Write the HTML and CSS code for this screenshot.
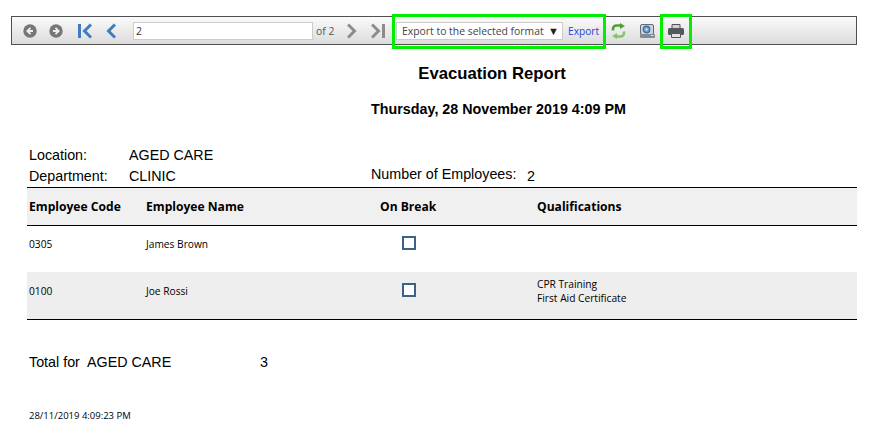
FILE: index.html
```html
<!DOCTYPE html>
<html lang="en">
<head>
<meta charset="utf-8">
<title>Evacuation Report</title>
<link rel="stylesheet" href="styles.css">
</head>
<body>
<div class="toolbar">
  <button class="icon nav-a" aria-label="Back"><svg width="14" height="14" viewBox="0 0 14 14"><circle cx="7" cy="7" r="6.700" fill="#777"/><path d="M7.500 3.800 4.300 7l3.200 3.200M4.500 7h5.500" fill="none" stroke="#eee" stroke-width="1.800"/></svg></button>
  <button class="icon nav-b" aria-label="Forward"><svg width="14" height="14" viewBox="0 0 14 14"><circle cx="7" cy="7" r="6.700" fill="#777"/><path d="M6.500 3.800 9.700 7l-3.200 3.200M9.500 7H4" fill="none" stroke="#eee" stroke-width="1.800"/></svg></button>
  <button class="icon nav-c" aria-label="First page"><svg width="14" height="16" viewBox="0 0 14 16"><path d="M1.500 1v14" stroke="#3f7cbf" stroke-width="3"/><path d="M13 1.500 6.500 8l6.500 6.500" fill="none" stroke="#3f7cbf" stroke-width="3"/></svg></button>
  <button class="icon nav-d" aria-label="Previous page"><svg width="10" height="16" viewBox="0 0 10 16"><path d="M9 1.500 2.500 8 9 14.500" fill="none" stroke="#3f7cbf" stroke-width="3"/></svg></button>
  <input class="page-input" type="text" value="2" aria-label="Page">
  <span class="of">of 2</span>
  <button class="icon nav-e" aria-label="Next page"><svg width="10" height="16" viewBox="0 0 10 16"><path d="M1 1.500 7.500 8 1 14.500" fill="none" stroke="#8c8c8c" stroke-width="3"/></svg></button>
  <button class="icon nav-f" aria-label="Last page"><svg width="14" height="16" viewBox="0 0 14 16"><path d="M12.500 1v14" stroke="#8c8c8c" stroke-width="3"/><path d="M1 1.500 7.500 8 1 14.500" fill="none" stroke="#8c8c8c" stroke-width="3"/></svg></button>
  <div class="mark export-group">
    <div class="select"><span>Export to the selected format</span><span class="caret">▼</span></div>
    <a class="export-link" href="#">Export</a>
  </div>
  <button class="icon refresh" aria-label="Refresh"><svg width="15" height="16" viewBox="0 0 15 16"><path d="M2 7.500V6a3.500 3.500 0 0 1 3.500-3.500H10" fill="none" stroke="#4f9e3a" stroke-width="2.600"/><path d="M9 0v6l5-3z" fill="#4f9e3a"/><path d="M13 8.500V10a3.500 3.500 0 0 1-3.500 3.500H5" fill="none" stroke="#86c46a" stroke-width="2.600"/><path d="M6 10v6l-5-3z" fill="#86c46a"/></svg></button>
  <button class="icon find" aria-label="Find"><svg width="15" height="14" viewBox="0 0 15 14"><rect x=".5" y=".5" width="13" height="10" rx="1.500" fill="#cdd6de" stroke="#667"/><rect x="0" y="10" width="15" height="4" rx="1" fill="#858a91"/><circle cx="6.500" cy="5.500" r="3.300" fill="#6f9fd0" stroke="#38689c" stroke-width="1.200"/><circle cx="6.500" cy="5.500" r="1.100" fill="#e8f0f8"/><path d="M11 11.500h2.500" stroke="#ddd"/></svg></button>
  <div class="mark print-group">
    <button class="icon" aria-label="Print"><svg width="16" height="14" viewBox="0 0 16 14"><path d="M4 .5h8V5H4z" fill="#cfd3d6" stroke="#555"/><rect x="0" y="4" width="16" height="7" rx="1.500" fill="#54585c"/><path d="M3.500 9.500h9v4h-9z" fill="#dfe2e4" stroke="#555"/></svg></button>
  </div>
</div>

<main class="report">
  <h1 class="title">Evacuation Report</h1>
  <p class="date">Thursday, 28 November 2019 4:09 PM</p>

  <div class="meta">
    <div class="meta-row"><span class="meta-label">Location:</span><span>AGED CARE</span></div>
    <div class="meta-row meta-second">
      <span class="meta-label">Department:</span><span class="meta-value">CLINIC</span>
      <span class="count-label">Number of Employees:</span><span>2</span>
    </div>
  </div>

  <table class="grid">
    <thead>
      <tr><th class="c1">Employee Code</th><th class="c2">Employee Name</th><th class="c3">On Break</th><th class="c4">Qualifications</th></tr>
    </thead>
    <tbody>
      <tr><td>0305</td><td class="name">James Brown</td><td class="check"><span class="box"></span></td><td></td></tr>
      <tr class="alt"><td>0100</td><td class="name">Joe Rossi</td><td class="check"><span class="box"></span></td><td class="quals">CPR Training<br>First Aid Certificate</td></tr>
    </tbody>
  </table>

  <div class="total"><span class="total-label">Total for</span><span class="total-name">AGED CARE</span><span>3</span></div>
  <div class="stamp">28/11/2019 4:09:23 PM</div>
</main>
</body>
</html>
```

FILE: styles.css
```css
html, body { margin: 0; padding: 0; background: #fff; }
body { height: 438px; overflow: hidden; font-family: "Liberation Sans", Arial, sans-serif; color: #000; }

.toolbar {
  display: flex;
  align-items: center;
  box-sizing: border-box;
  width: 846px;
  height: 29px;
  margin: 16px 0 0 11px;
  padding-left: 11px;
  border: 1px solid #505050;
  background: linear-gradient(#fafafa, #dcdcdc);
}
.icon { display: flex; align-items: center; justify-content: center; padding: 0; border: 0; background: none; flex: none; }
.nav-a { width: 14px; }
.nav-b { width: 14px; margin-left: 12px; }
.nav-c { width: 14px; margin-left: 15px; }
.nav-d { width: 10px; margin-left: 14px; }
.page-input {
  box-sizing: border-box;
  width: 180px;
  height: 18px;
  margin-left: 17px;
  padding: 0 0 0 2px;
  border: 1px solid #ccc;
  background: #fff;
  font: 10.400px "Open Sans", sans-serif;
  color: #333;
  outline: 0;
}
.of { margin-left: 3px; width: 20px; font: 10.400px "Open Sans", sans-serif; color: #555; white-space: nowrap; }
.nav-e { width: 10px; margin-left: 11px; }
.nav-f { width: 14px; margin-left: 14px; }

.mark { display: flex; align-items: center; box-sizing: border-box; height: 35px; margin-top: 1px; border: 3px solid #00ee00; flex: none; }
.export-group { width: 214px; margin-left: 7px; padding-left: 1px; }
.select {
  display: flex;
  align-items: center;
  justify-content: space-between;
  box-sizing: border-box;
  width: 167px;
  height: 18px;
  padding: 0 3px 0 5px;
  border: 1px solid #ccc;
  background: #fff;
  font: 10.400px "Open Sans", sans-serif;
  color: #444;
  white-space: nowrap;
}
.caret { margin-top: -2px; font-size: 11px; color: #222; }
.export-link { margin-left: 5px; font: 10.200px "Open Sans", sans-serif; color: #2a3fd8; text-decoration: none; }
.refresh { width: 15px; margin-left: 5px; }
.find { width: 15px; margin-left: 14px; }
.print-group { width: 32px; margin-left: 5px; justify-content: center; }

.title { margin: 20px 0 0; padding-left: 103px; text-align: center; font-size: 16.700px; line-height: 18px; font-weight: bold; }
.date { margin: 18px 0 0; padding-left: 116px; text-align: center; font-size: 14.300px; line-height: 16px; font-weight: bold; }

.meta { margin: 30px 0 0 29px; font-size: 14.300px; line-height: 16px; }
.meta-row { display: flex; }
.meta-label { width: 100px; }
.meta-second { margin-top: 5px; }
.meta-value { width: 242px; }
.count-label { width: 156px; margin-top: -2px; }

.grid { width: 830px; margin: 3px 0 0 27px; border-collapse: collapse; table-layout: fixed; font-family: "Open Sans", sans-serif; font-size: 10.200px; }
.grid th { box-sizing: border-box; height: 38px; padding: 0 0 0 2px; text-align: left; font-size: 12.100px; background: #f0f0f0; border-top: 1px solid #000; border-bottom: 1px solid #000; }
.grid th.c1 { width: 115px; }
.grid th.c2 { width: 221px; padding-left: 4px; }
.grid th.c3 { width: 172px; padding-left: 17px; }
.grid td { box-sizing: border-box; height: 46px; padding: 11px 0 0 2px; vertical-align: top; }
.grid td.name { padding-left: 4px; }
.grid td.check { padding: 10px 0 0 39px; }
.grid .alt td { height: 48px; padding-top: 12px; background: #eee; border-bottom: 1px solid #000; }
.grid .alt td.check { padding-top: 11px; }
.grid .alt td.quals { padding-top: 5px; }
.box { display: block; box-sizing: border-box; width: 14px; height: 14px; border: 2px solid #3b6288; background: #fff; }

.total { display: flex; margin: 34px 0 0 29px; font-size: 14.300px; line-height: 16px; }
.total-label { width: 58px; }
.total-name { width: 173px; }
.stamp { margin: 40px 0 0 29px; font: 9.500px/11px "Open Sans", sans-serif; }
```
